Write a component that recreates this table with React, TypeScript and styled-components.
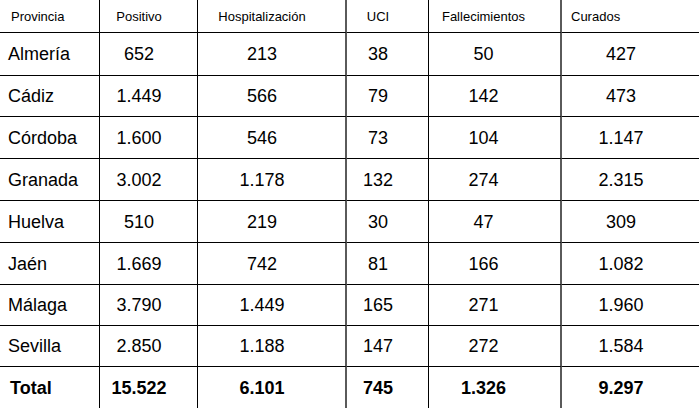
import React from "react";
import styled, { createGlobalStyle } from "styled-components";

const GlobalStyle = createGlobalStyle`
  html, body { margin: 0; padding: 0; background: #fff; }
  body { font-family: "Liberation Sans", Arial, sans-serif; color: #000; }
`;

const Grid = styled.div`
  display: grid;
  width: 699px;
  grid-template-columns: 100px 98px 149px 82px 133px 137px;
  grid-template-rows: 33px 43px 41px 42px 42px 42px 42px 41px 41px 42px;
  background: #fff;
`;

type CellProps = { $col: number; $head?: boolean; $bold?: boolean; $last?: boolean };

const borderFor = (col: number) => {
  if (col === 5) return "none";
  if (col === 2 || col === 4) return "2px solid #5a5a5a";
  return "1px solid #000";
};

const Cell = styled.div<CellProps>`
  box-sizing: border-box;
  display: flex;
  align-items: center;
  justify-content: ${(p) => (p.$col === 0 || (p.$head && p.$col === 5) ? "flex-start" : "center")};
  padding-left: ${(p) => (p.$col === 0 ? (p.$head ? "11px" : p.$bold ? "10px" : "8px") : p.$head && p.$col === 5 ? "9px" : "0")};
  padding-right: ${(p) => (p.$col === 0 || (p.$head && p.$col === 5) ? "0" : p.$col === 4 ? "22px" : "19px")};
  border-right: ${(p) => borderFor(p.$col)};
  border-bottom: ${(p) => (p.$last ? "none" : "1px solid #000")};
  font-size: ${(p) => (p.$head ? "13px" : "18px")};
  font-weight: ${(p) => (p.$bold ? 700 : 400)};
  white-space: nowrap;
  line-height: 1;
`;

const headers = ["Provincia", "Positivo", "Hospitalización", "UCI", "Fallecimientos", "Curados"];

const rows: string[][] = [
  ["Almería", "652", "213", "38", "50", "427"],
  ["Cádiz", "1.449", "566", "79", "142", "473"],
  ["Córdoba", "1.600", "546", "73", "104", "1.147"],
  ["Granada", "3.002", "1.178", "132", "274", "2.315"],
  ["Huelva", "510", "219", "30", "47", "309"],
  ["Jaén", "1.669", "742", "81", "166", "1.082"],
  ["Málaga", "3.790", "1.449", "165", "271", "1.960"],
  ["Sevilla", "2.850", "1.188", "147", "272", "1.584"],
];

const total = ["Total", "15.522", "6.101", "745", "1.326", "9.297"];

export default function App() {
  return (
    <>
      <GlobalStyle />
      <Grid>
        {headers.map((h, i) => (
          <Cell key={"h" + i} $col={i} $head>
            {h}
          </Cell>
        ))}
        {rows.map((r, ri) =>
          r.map((v, ci) => (
            <Cell key={ri + "-" + ci} $col={ci}>
              {v}
            </Cell>
          ))
        )}
        {total.map((v, ci) => (
          <Cell key={"t" + ci} $col={ci} $bold $last>
            {v}
          </Cell>
        ))}
      </Grid>
    </>
  );
}
